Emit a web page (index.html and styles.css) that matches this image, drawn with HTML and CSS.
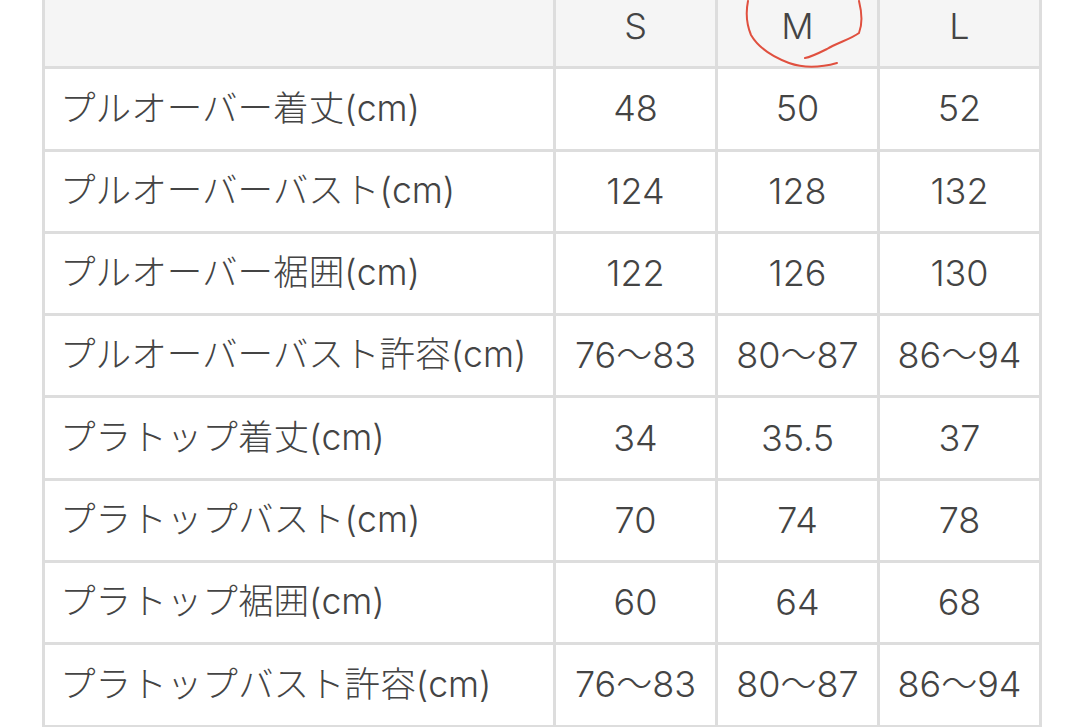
FILE: index.html
```html
<!DOCTYPE html>
<html lang="ja">
<head>
<meta charset="utf-8">
<title>サイズ表</title>
<link rel="stylesheet" href="styles.css">
</head>
<body>
<div class="sheet">
  <table class="size-table">
    <colgroup>
      <col class="c-label">
      <col class="c-size">
      <col class="c-size">
      <col class="c-size">
    </colgroup>
    <thead>
      <tr class="head">
        <th></th>
        <th>S</th>
        <th class="marked">M
          <svg class="circle" width="130" height="80" viewBox="0 0 130 80">
            <path d="M17 14 C15 24 15 36 20 48 C27 60 42 70 58 76 C72 81 88 81 106 76" />
            <path d="M128 14 C131 26 132 36 128 46 C120 52 106 56 96 62 C88 66 80 70 74 71" />
          </svg>
        </th>
        <th>L</th>
      </tr>
    </thead>
    <tbody>
      <tr><td class="label">プルオーバー着丈(cm)</td><td>48</td><td>50</td><td>52</td></tr>
      <tr><td class="label">プルオーバーバスト(cm)</td><td>124</td><td>128</td><td>132</td></tr>
      <tr><td class="label">プルオーバー裾囲(cm)</td><td>122</td><td>126</td><td>130</td></tr>
      <tr><td class="label">プルオーバーバスト許容(cm)</td><td>76〜83</td><td>80〜87</td><td>86〜94</td></tr>
      <tr><td class="label">プラトップ着丈(cm)</td><td>34</td><td>35.5</td><td>37</td></tr>
      <tr><td class="label">プラトップバスト(cm)</td><td>70</td><td>74</td><td>78</td></tr>
      <tr><td class="label">プラトップ裾囲(cm)</td><td>60</td><td>64</td><td>68</td></tr>
      <tr><td class="label">プラトップバスト許容(cm)</td><td>76〜83</td><td>80〜87</td><td>86〜94</td></tr>
    </tbody>
  </table>
</div>
</body>
</html>
```

FILE: styles.css
```css
html, body {
  margin: 0;
  padding: 0;
  background: #ffffff;
}

body {
  overflow: hidden;
}

.sheet {
  margin-top: -16px;
  padding-left: 42px;
}

.size-table {
  border-collapse: collapse;
  table-layout: fixed;
  width: 999px;
  font-family: "Inter", "Noto Sans CJK JP", sans-serif;
  font-size: 36px;
  font-weight: 300;
  color: #444444;
}

.c-label { width: 511px; }
.c-size { width: 162px; }

.size-table th,
.size-table td {
  border: 3px solid #dddddd;
  height: 79.3px;
  padding: 0;
  text-align: center;
  vertical-align: middle;
  font-weight: 300;
  white-space: nowrap;
  line-height: 1.2;
}

.size-table thead th {
  background: #f5f5f5;
}

.size-table td.label {
  text-align: left;
  padding-left: 15px;
  font-size: 35.6px;
}

.marked {
  position: relative;
}

.circle {
  position: absolute;
  left: 13px;
  top: 0;
  overflow: visible;
}

.circle path {
  fill: none;
  stroke: #e0503f;
  stroke-width: 2;
  stroke-linecap: round;
}
```
